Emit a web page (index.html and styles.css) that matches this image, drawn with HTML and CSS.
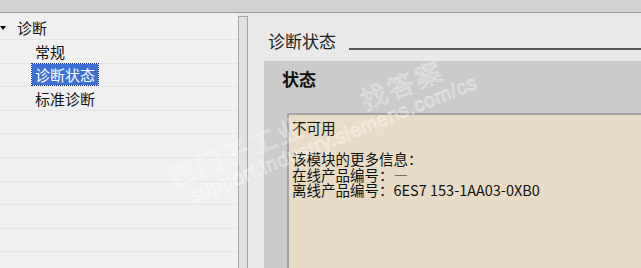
FILE: index.html
```html
<!DOCTYPE html>
<html lang="zh-CN">

<head>
  <title>诊断状态</title>
  <meta charset="UTF-8">
  <meta name="viewport" content="width=device-width, initial-scale=1.0">
  <link rel="stylesheet" href="styles.css">
</head>

<body>

<div class="topbar"></div>

<div class="main">
  <div class="tree">
    <div class="row"><span class="caret"></span><span class="label">诊断</span></div>
    <div class="row child"><span class="label">常规</span></div>
    <div class="row child"><span class="label selected">诊断状态</span></div>
    <div class="row child"><span class="label">标准诊断</span></div>
    <div class="row"></div>
    <div class="row"></div>
    <div class="row"></div>
    <div class="row"></div>
    <div class="row"></div>
    <div class="row"></div>
    <div class="row"></div>
  </div>

  <div class="splitter"></div>

  <div class="content">
    <div class="section-title">
      <span class="title-text">诊断状态</span>
      <span class="title-line"></span>
    </div>

    <div class="panel">
      <div class="panel-head">状态</div>
      <div class="status-box">
        <div>不可用</div>
        <div>&nbsp;</div>
        <div>该模块的更多信息：</div>
        <div>在线产品编号：&#8212;</div>
        <div>离线产品编号：6ES7 153-1AA03-0XB0</div>
      </div>
    </div>
  </div>
</div>

<div class="watermark">
  <div class="wm-big">西门子工业<span class="wm-gap"></span>找答案</div>
  <div class="wm-small">support.industry.siemens.com/cs</div>
</div>

</body>

</html>
```

FILE: styles.css
```css
html, body {
  margin: 0;
  padding: 0;
}

body {
  width: 641px;
  height: 268px;
  overflow: hidden;
  position: relative;
  background: #e9e9e9;
  font-family: "Noto Sans CJK SC", "Noto Sans", sans-serif;
  color: #111;
}

.topbar {
  height: 12px;
  background: #d2d2d2;
  border-bottom: 1px solid #9c9c9c;
}

.main {
  display: flex;
  height: 255px;
}

.tree {
  width: 238px;
  padding-top: 3.4px;
  background: #f0f0f0;
}

.row {
  display: flex;
  align-items: center;
  height: 23.6px;
  box-sizing: border-box;
  border-bottom: 1px solid #e5e5e5;
  font-size: 15px;
}

.caret {
  width: 0;
  height: 0;
  margin-right: 8px;
  border-left: 3.5px solid transparent;
  border-right: 3.5px solid transparent;
  border-top: 4px solid #000;
}

.row.child {
  padding-left: 32px;
}

.label {
  padding: 0 3px;
  line-height: 21px;
}

.selected {
  background: #3c70d6;
  color: #fff;
  outline: 1px dotted #1a2f66;
}

.splitter {
  width: 8px;
  margin-top: 3px;
  background: #e2e2e2;
  border: 1px solid #a6a6a6;
  border-bottom: none;
}

.content {
  flex: 1;
  padding: 16px 0 0 16px;
  display: flex;
  flex-direction: column;
}

.section-title {
  display: flex;
  align-items: flex-start;
  height: 24px;
  padding-left: 4px;
}

.title-text {
  font-size: 17px;
  line-height: 24px;
  color: #222;
}

.title-line {
  flex: 1;
  height: 2px;
  margin: 19px 0 0 13px;
  background: #555;
}

.panel {
  flex: 1;
  margin-top: 8px;
  background: #cbcbcb;
  display: flex;
  flex-direction: column;
}

.panel-head {
  padding: 6px 0 0 18px;
  font-size: 17px;
  font-weight: bold;
  line-height: 24px;
}

.status-box {
  flex: 1;
  margin: 22px 0 0 23px;
  padding: 5px 0 0 3px;
  background: #e8dcc6;
  border-top: 2px solid #a4a4a4;
  border-left: 2px solid #a4a4a4;
  font-size: 14.5px;
  line-height: 15.5px;
}

/* watermark over the screenshot */
.watermark {
  position: absolute;
  left: 164px;
  top: 164px;
  transform: rotate(-22deg);
  transform-origin: left top;
  pointer-events: none;
  color: rgba(255, 255, 255, 0.1);
  -webkit-text-stroke: 0.7px rgba(255, 255, 255, 0.55);
  white-space: nowrap;
}

.wm-big {
  font-size: 26px;
  line-height: 30px;
  letter-spacing: 3px;
}

.wm-gap {
  display: inline-block;
  width: 62px;
}

.wm-small {
  font-family: "Liberation Sans", sans-serif;
  font-size: 20px;
  line-height: 20px;
  letter-spacing: 0.6px;
  margin-left: 12px;
}
```
